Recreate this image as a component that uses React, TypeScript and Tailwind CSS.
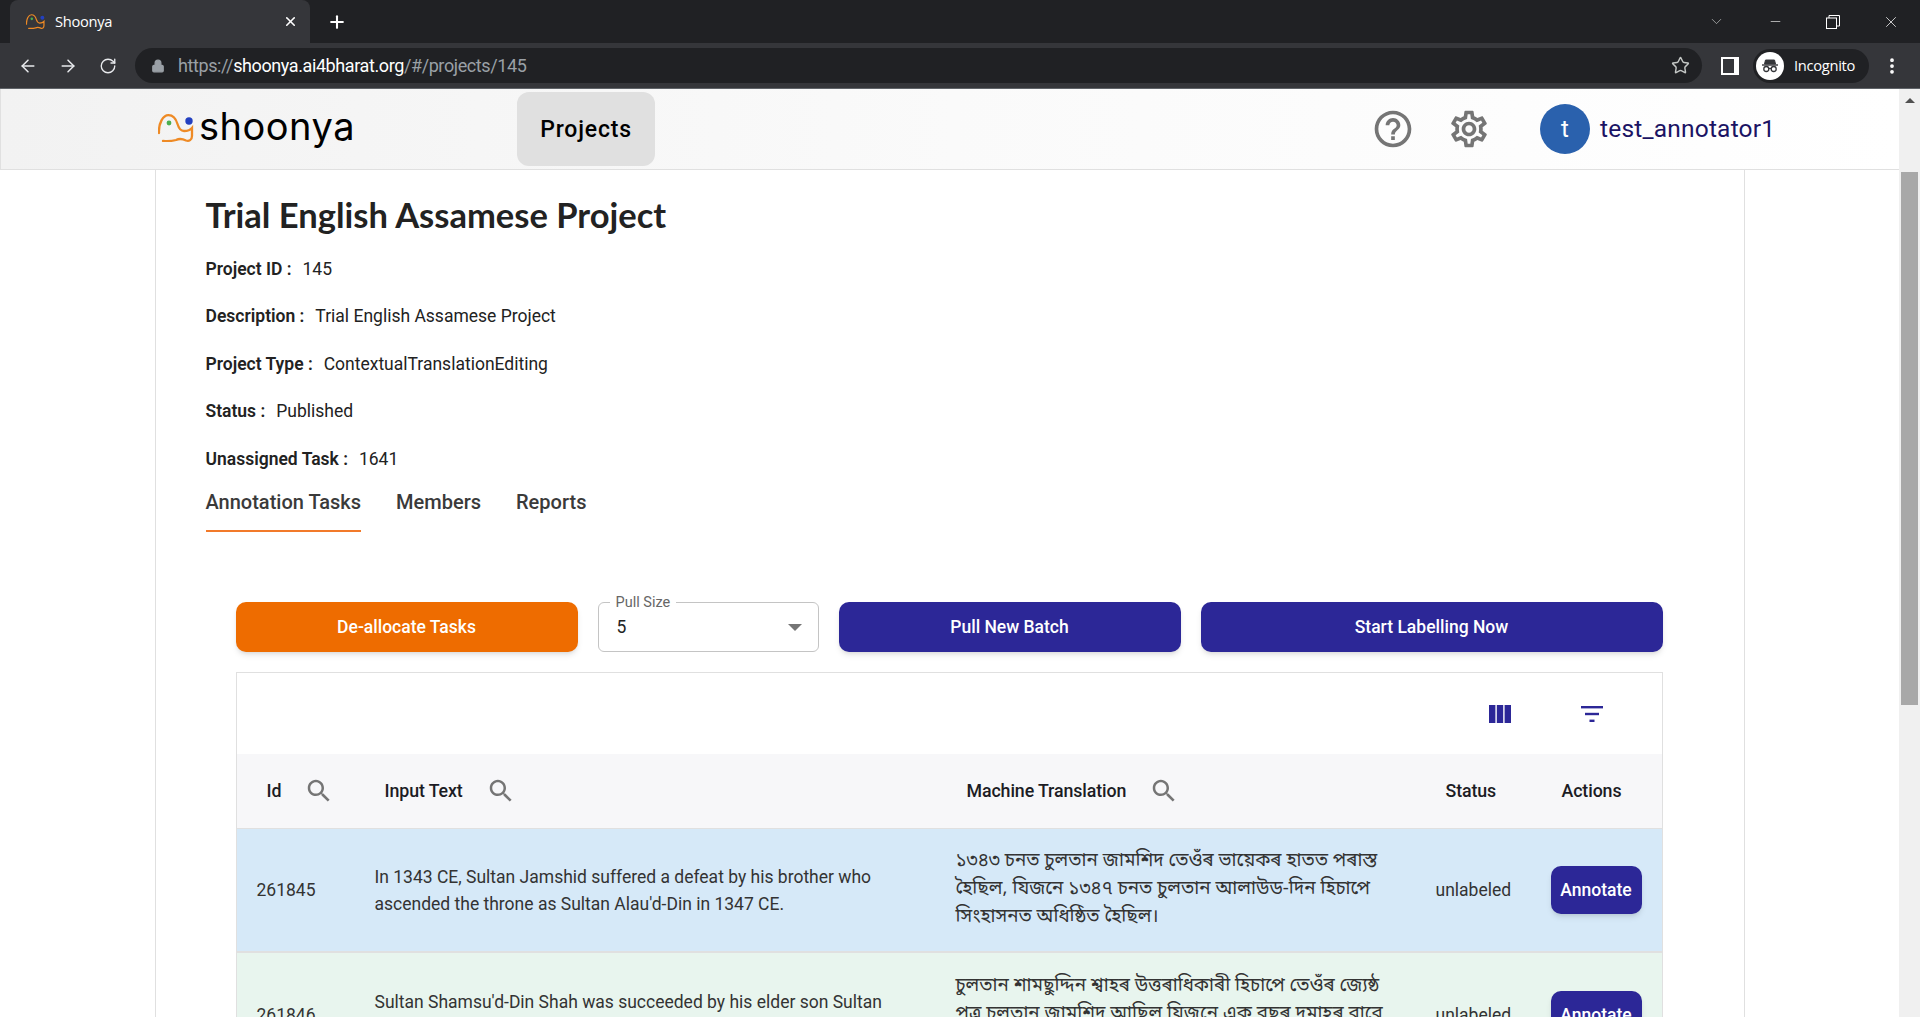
import { ChevronDown, Minus, X, Plus, ArrowLeft, ArrowRight, RotateCw, Lock, Star, MoreVertical } from "lucide-react";

const infoRows = [
  { label: "Project ID :", value: "145" },
  { label: "Description :", value: "Trial English Assamese Project" },
  { label: "Project Type :", value: "ContextualTranslationEditing" },
  { label: "Status :", value: "Published" },
  { label: "Unassigned Task :", value: "1641" },
];

const taskRows = [
  {
    id: "261845",
    input: "In 1343 CE, Sultan Jamshid suffered a defeat by his brother who ascended the throne as Sultan Alau'd-Din in 1347 CE.",
    output: "১৩৪৩ চনত চুলতান জামশিদ তেওঁৰ ভায়েকৰ হাতত পৰাস্ত হৈছিল, যিজনে ১৩৪৭ চনত চুলতান আলাউড-দিন হিচাপে সিংহাসনত অধিষ্ঠিত হৈছিল।",
    rowClass: "bg-[#d6e9f8] h-[124px] items-center border-b-2 border-[#e0e0e0]",
  },
  {
    id: "261846",
    input: "Sultan Shamsu'd-Din Shah was succeeded by his elder son Sultan Jamshid who ruled for one year and two months.",
    output: "চুলতান শামছুদ্দিন শ্বাহৰ উত্তৰাধিকাৰী হিচাপে তেওঁৰ জ্যেষ্ঠ পুত্ৰ চুলতান জামশিদ আছিল যিজনে এক বছৰ দুমাহৰ বাবে শাসন কৰিছিল।",
    rowClass: "bg-[#e8f5ee] h-[124px] items-center",
  },
];

const ElephantLogo = ({ className }: { className: string }) => (
  <svg viewBox="0 0 36 28" fill="none" className={className}>
    <path
      d="M1 19C0.5 9 5 1.2 10.5 1.2C16 1.2 18 5 19.5 10C21 15 23 17 26 17C29 17 32 16.5 34 14V22C34 26 31 27.5 28 26.5C25 25 22 24 18 26C13 27.5 9 27 5 27"
      stroke="#ee8a25"
      strokeWidth="2.3"
      strokeLinecap="round"
    />
    <circle cx="11" cy="9" r="2.4" fill="#4caf50" />
    <circle cx="31" cy="7" r="3.7" fill="#2340c0" />
  </svg>
);

const SearchIcon = () => (
  <svg viewBox="0 0 24 24" className="ml-[23px] w-[30px] h-[30px]" fill="#757575">
    <path d="M15.5 14h-.79l-.28-.27C15.41 12.59 16 11.11 16 9.5 16 5.91 13.09 3 9.5 3S3 5.91 3 9.5 5.91 16 9.5 16c1.61 0 3.09-.59 4.23-1.57l.27.28v.79l5 4.99L20.49 19l-4.99-5zm-6 0C7.01 14 5 11.99 5 9.5S7.01 5 9.5 5 14 7.01 14 9.5 11.99 14 9.5 14z" />
  </svg>
);

const TabBar = () => (
  <div className="h-[43px] bg-[#202124] flex items-center shrink-0 text-white">
    <div className="ml-[10px] w-[300px] h-[43px] bg-[#35363a] rounded-t-lg flex items-center pl-4 pr-[12px]">
      <ElephantLogo className="w-[19px] h-[17px]" />
      <span className="ml-[10px] text-[14.7px] font-['Open_Sans',sans-serif] tracking-[-0.3px]">Shoonya</span>
      <X size={15} strokeWidth={2.5} className="ml-auto" />
    </div>
    <Plus size={20} strokeWidth={2.5} className="ml-[17px]" />
    <ChevronDown size={17} strokeWidth={1} className="ml-auto text-[#c4c7c5]" />
    <Minus size={15} strokeWidth={1} className="ml-[43px]" />
    <svg viewBox="0 0 14 14" fill="none" stroke="white" strokeWidth="1" className="ml-[43px] w-[14px] h-[14px]">
      <rect x="0.5" y="3" width="10" height="10.5" />
      <path d="M3 3V0.5H13.5V11H10.5" />
    </svg>
    <X size={18} strokeWidth={1} className="ml-[42px] mr-[20px]" />
  </div>
);

const AddressBar = () => (
  <div className="h-[46px] bg-[#35363a] border-b border-[#5f6368] flex items-center shrink-0 text-[#e8eaed]">
    <ArrowLeft size={20} strokeWidth={1.8} className="ml-[18px]" />
    <ArrowRight size={20} strokeWidth={1.8} className="ml-[20px]" />
    <RotateCw size={18} strokeWidth={1.8} className="ml-[21px]" />
    <div className="ml-[18px] w-[1567px] h-[35px] bg-[#202124] rounded-full flex items-center pl-[16px] pr-[12px]">
      <Lock size={14} fill="#9aa0a6" stroke="#9aa0a6" />
      <span className="ml-[13px] text-[18px] font-['Roboto',sans-serif] text-[#9aa0a6] tracking-[-0.4px]">
        https://<span className="text-white">shoonya.ai4bharat.org</span>/#/projects/145
      </span>
      <Star size={19} strokeWidth={1.8} className="ml-auto text-[#c4c7c5]" />
    </div>
    <div className="ml-[19px] w-[18px] h-[18px] border-[2px] border-r-[5px] border-white bg-[#35363a]" />
    <div className="ml-[14px] w-[116px] h-[34px] bg-[#202124] rounded-full flex items-center pl-[3px]">
      <div className="w-[28px] h-[28px] rounded-full bg-white flex items-center justify-center">
        <svg viewBox="0 0 20 20" className="w-[20px] h-[20px]" fill="none" stroke="#35363a">
          <path d="M5.5 4H14.5L15.5 8H4.5Z" fill="#35363a" />
          <path d="M2 9H18" strokeWidth="1.4" />
          <circle cx="6.3" cy="13" r="2.5" strokeWidth="1.3" />
          <circle cx="13.7" cy="13" r="2.5" strokeWidth="1.3" />
          <path d="M8.8 12.5H11.2" strokeWidth="1.2" />
        </svg>
      </div>
      <span className="ml-[10px] text-[14.7px] font-['Open_Sans',sans-serif] tracking-[-0.3px] text-white">Incognito</span>
    </div>
    <MoreVertical size={20} strokeWidth={2.5} className="ml-[13px] text-white" />
  </div>
);

const AppHeader = () => (
  <header className="h-[81px] shrink-0 border-b border-l border-[#e0e0e0] bg-gradient-to-r from-[#f2f2f2] via-[#fafafa] to-white flex items-center font-['Roboto',sans-serif]">
    <div className="ml-[157px] flex items-center gap-[5px]">
      <ElephantLogo className="w-[36px] h-[28px] -mt-[3px]" />
      <span className="font-['Inter',sans-serif] text-[38px] leading-none text-black tracking-[0.5px] -mt-[6px]">shoonya</span>
    </div>
    <div className="ml-[162px] w-[138px] h-[74px] pt-[2px] rounded-xl bg-[#e0e0e0] flex items-center justify-center text-[23px] font-medium tracking-[0.8px] text-black">
      Projects
    </div>
    <svg viewBox="0 0 24 24" className="ml-[716px] w-[44px] h-[44px]" fill="#757575">
      <path d="M11 18h2v-2h-2v2zm1-16C6.48 2 2 6.48 2 12s4.48 10 10 10 10-4.48 10-10S17.52 2 12 2zm0 18c-4.41 0-8-3.59-8-8s3.59-8 8-8 8 3.59 8 8-3.59 8-8 8zm0-14c-2.21 0-4 1.79-4 4h2c0-1.1.9-2 2-2s2 .9 2 2c0 2-3 1.75-3 5h2c0-2.25 3-2.5 3-5 0-2.21-1.79-4-4-4z" />
    </svg>
    <svg viewBox="0 0 24 24" className="ml-[32px] w-[44px] h-[44px]" fill="#757575">
      <path d="M19.43 12.98c.04-.32.07-.64.07-.98 0-.34-.03-.66-.07-.98l2.11-1.65c.19-.15.24-.42.12-.64l-2-3.46c-.09-.16-.26-.25-.44-.25-.06 0-.12.01-.17.03l-2.49 1c-.52-.4-1.08-.73-1.69-.98l-.38-2.65C14.46 2.18 14.25 2 14 2h-4c-.25 0-.46.18-.49.42l-.38 2.65c-.61.25-1.17.59-1.69.98l-2.49-1c-.06-.02-.12-.03-.18-.03-.17 0-.34.09-.43.25l-2 3.46c-.13.22-.07.49.12.64l2.11 1.65c-.04.32-.07.65-.07.98 0 .33.03.66.07.98l-2.11 1.65c-.19.15-.24.42-.12.64l2 3.46c.09.16.26.25.44.25.06 0 .12-.01.17-.03l2.49-1c.52.4 1.08.73 1.69.98l.38 2.65c.03.24.24.42.49.42h4c.25 0 .46-.18.49-.42l.38-2.65c.61-.25 1.17-.59 1.69-.98l2.49 1c.06.02.12.03.18.03.17 0 .34-.09.43-.25l2-3.46c.12-.22.07-.49-.12-.64l-2.11-1.65zm-1.98-1.71c.04.31.05.52.05.73 0 .21-.02.43-.05.73l-.14 1.13.89.7 1.08.84-.7 1.21-1.27-.51-1.04-.42-.9.68c-.43.32-.84.56-1.25.73l-1.06.43-.16 1.13-.2 1.35h-1.4l-.19-1.35-.16-1.13-1.06-.43c-.43-.18-.83-.41-1.23-.71l-.91-.7-1.06.43-1.27.51-.7-1.21 1.08-.84.89-.7-.14-1.13c-.03-.31-.05-.54-.05-.74s.02-.43.05-.73l.14-1.13-.89-.7-1.08-.84.7-1.21 1.27.51 1.04.42.9-.68c.43-.32.84-.56 1.25-.73l1.06-.43.16-1.13.2-1.35h1.39l.19 1.35.16 1.13 1.06.43c.43.18.83.41 1.23.71l.91.7 1.06-.43 1.27-.51.7 1.21-1.07.85-.89.7.14 1.13zM12 8c-2.21 0-4 1.79-4 4s1.79 4 4 4 4-1.79 4-4-1.79-4-4-4zm0 6c-1.1 0-2-.9-2-2s.9-2 2-2 2 .9 2 2-.9 2-2 2z" />
    </svg>
    <div className="ml-[49px] w-[50px] h-[50px] rounded-full bg-[#2a61ad] text-white text-[24px] flex items-center justify-center">t</div>
    <span className="ml-[10px] text-[24.5px] text-[#1b1464] tracking-[0.2px]">test_annotator1</span>
  </header>
);

const ColumnHead = ({ label, search, offset }: { label: string; search?: boolean; offset: string }) => (
  <div className={`flex items-center ${offset}`}>
    <span className="text-[17.8px] font-medium text-[#1c1c24] tracking-[-0.1px]">{label}</span>
    {search && <SearchIcon />}
  </div>
);

const TasksTable = () => (
  <div className="mt-[20px] border-x border-t border-[#e0e0e0] ml-[30px] w-[1427px]">
    <div className="h-[81px] bg-white flex items-center justify-end pr-[59px]">
      <svg viewBox="0 0 22 18" className="w-[22px] h-[18px]" fill="#2c2797">
        <rect x="0" width="6.4" height="18" />
        <rect x="7.8" width="6.4" height="18" />
        <rect x="15.6" width="6.4" height="18" />
      </svg>
      <svg viewBox="0 0 22 16" className="ml-[70px] w-[22px] h-[16px]" fill="#2c2797">
        <rect y="0" width="22" height="2.4" />
        <rect x="4" y="6.8" width="14" height="2.4" />
        <rect x="8.5" y="13.6" width="5" height="2.4" />
      </svg>
    </div>
    <div className="h-[75px] bg-[#f7f7f9] grid grid-cols-[118px_581px_480px_115px_127px] items-center pl-1 border-b border-[#e0e0e0]">
      <ColumnHead label="Id" search offset="pl-[26px]" />
      <ColumnHead label="Input Text" search offset="pl-[26px]" />
      <ColumnHead label="Machine Translation" search offset="pl-[27px]" />
      <ColumnHead label="Status" offset="pl-[26px]" />
      <ColumnHead label="Actions" offset="pl-[27px]" />
    </div>
    {taskRows.map((row) => (
      <div key={row.id} className={`grid grid-cols-[118px_581px_480px_115px_127px] pl-1 text-[17.5px] text-[#333] ${row.rowClass}`}>
        <div className="pl-4">{row.id}</div>
        <div className="pl-4 pr-[50px] pt-[1px] leading-[27px]">{row.input}</div>
        <div className="pl-4 pr-[20px] text-[18.8px] leading-[28px] font-['Noto_Sans_Bengali','Noto_Sans','DejaVu_Sans',sans-serif]">{row.output}</div>
        <div className="pl-4">unlabeled</div>
        <div className="pl-4">
          <button className="w-[91px] h-[48px] rounded-[10px] bg-[#2c2797] text-white font-medium text-[17.5px] shadow-md">Annotate</button>
        </div>
      </div>
    ))}
  </div>
);

export default function App() {
  return (
    <div className="h-screen overflow-hidden flex flex-col bg-white">
      <TabBar />
      <AddressBar />
      <div className="flex-1 min-h-0 flex">
        <div className="w-[1899px] flex flex-col min-h-0 font-['Roboto',sans-serif]">
          <AppHeader />
          <main className="mx-auto w-[1590px] flex-1 min-h-0 border-x border-[#e0e0e0] pl-[50px]">
            <h1 className="pt-[25px] h-[75px] text-[34.5px] leading-[40px] font-bold text-[#222] font-['Lato',sans-serif]">
              Trial English Assamese Project
            </h1>
            {infoRows.map((row) => (
              <p key={row.label} className="h-[47.5px] flex items-center text-[17.5px] text-[#222]">
                <span className="font-semibold mr-[11px]">{row.label}</span>
                {row.value}
              </p>
            ))}
            <div className="flex gap-[35px] h-[49.5px] text-[20px] font-medium text-[#3a3a3a]">
              <div className="border-b-2 border-[#f27a2a] pt-[4.5px]">Annotation Tasks</div>
              <div className="pt-[4.5px]">Members</div>
              <div className="pt-[4.5px]">Reports</div>
            </div>
            <div className="mt-[70px] ml-[30px] flex gap-[20px] h-[50px]">
              <button className="w-[342px] rounded-[10px] bg-[#ee6c00] text-white font-medium text-[17.5px] shadow-md">De-allocate Tasks</button>
              <div className="relative w-[221px] rounded-[6px] border border-[#c4c4c4] flex items-center pl-[18px] pr-[16px] text-[17.5px] text-[#222]">
                <span className="absolute -top-[11px] left-[11px] bg-white px-[6px] text-[14.5px] text-[#666]">Pull Size</span>
                5
                <span className="ml-auto w-0 h-0 border-x-[7px] border-x-transparent border-t-[7px] border-t-[#757575]" />
              </div>
              <button className="w-[342px] rounded-[10px] bg-[#2c2797] text-white font-medium text-[17.5px] shadow-md">Pull New Batch</button>
              <button className="w-[462px] rounded-[10px] bg-[#2c2797] text-white font-medium text-[17.5px] shadow-md">Start Labelling Now</button>
            </div>
            <TasksTable />
          </main>
        </div>
        <div className="w-[21px] bg-[#f0f0f0] flex flex-col items-center pt-[9px]">
          <span className="w-0 h-0 border-x-[5px] border-x-transparent border-b-[5px] border-b-[#505050]" />
          <div className="mt-[69px] w-[17px] h-[533px] bg-[#a8a8a8]" />
        </div>
      </div>
    </div>
  );
}
